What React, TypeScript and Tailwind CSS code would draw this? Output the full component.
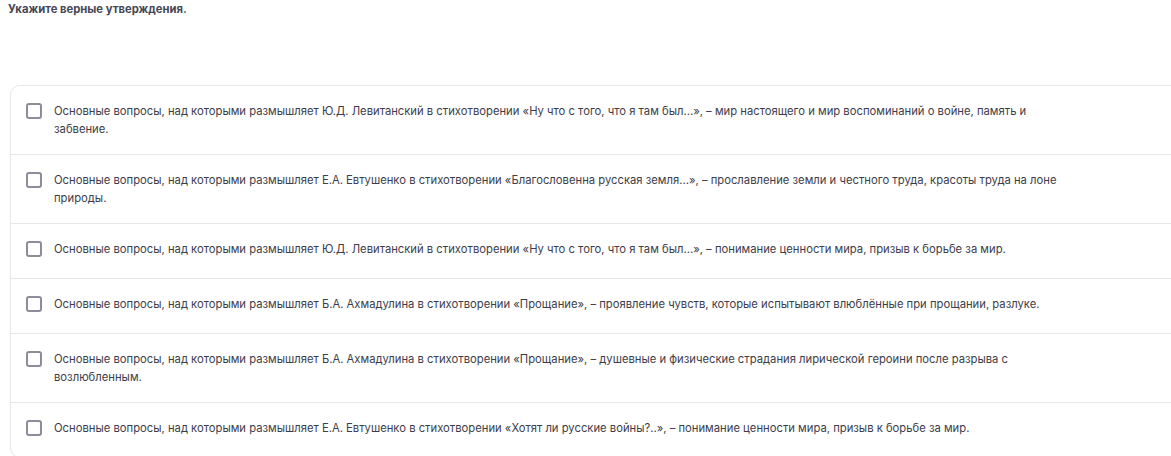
const items = [
  "Основные вопросы, над которыми размышляет Ю.Д. Левитанский в стихотворении «Ну что с того, что я там был...», – мир настоящего и мир воспоминаний о войне, память и забвение.",
  "Основные вопросы, над которыми размышляет Е.А. Евтушенко в стихотворении «Благословенна русская земля...», – прославление земли и честного труда, красоты труда на лоне природы.",
  "Основные вопросы, над которыми размышляет Ю.Д. Левитанский в стихотворении «Ну что с того, что я там был...», – понимание ценности мира, призыв к борьбе за мир.",
  "Основные вопросы, над которыми размышляет Б.А. Ахмадулина в стихотворении «Прощание», – проявление чувств, которые испытывают влюблённые при прощании, разлуке.",
  "Основные вопросы, над которыми размышляет Б.А. Ахмадулина в стихотворении «Прощание», – душевные и физические страдания лирической героини после разрыва с возлюбленным.",
  "Основные вопросы, над которыми размышляет Е.А. Евтушенко в стихотворении «Хотят ли русские войны?..», – понимание ценности мира, призыв к борьбе за мир.",
];

export default function App() {
  return (
    <div className="h-[456px] w-[1171px] overflow-hidden bg-white font-['Inter',sans-serif]">
      <div className="px-2 pt-[2px]">
        <h1 className="text-[11.25px] font-bold leading-[14px] text-[#474756]">Укажите верные утверждения.</h1>
      </div>
      <div className="ml-[10px] mt-[69px] w-[1200px] rounded-[10px] border border-[#e6e6ea]">
        {items.map((text, i) => (
          <label
            key={i}
            className={`flex items-start gap-[12px] py-[16px] pl-[15px] ${i > 0 ? "border-t border-[#e6e6ea]" : ""}`}
          >
            <span className="flex h-[22px] shrink-0 items-start pt-[1px]">
              <span className="block h-[16px] w-[16px] rounded-[3px] border-2 border-[#8c8c9a] bg-white" />
            </span>
            <span className="max-w-[1012px] text-[11.25px] leading-[18px] text-[#3d3d4a]">{text}</span>
          </label>
        ))}
      </div>
    </div>
  );
}
